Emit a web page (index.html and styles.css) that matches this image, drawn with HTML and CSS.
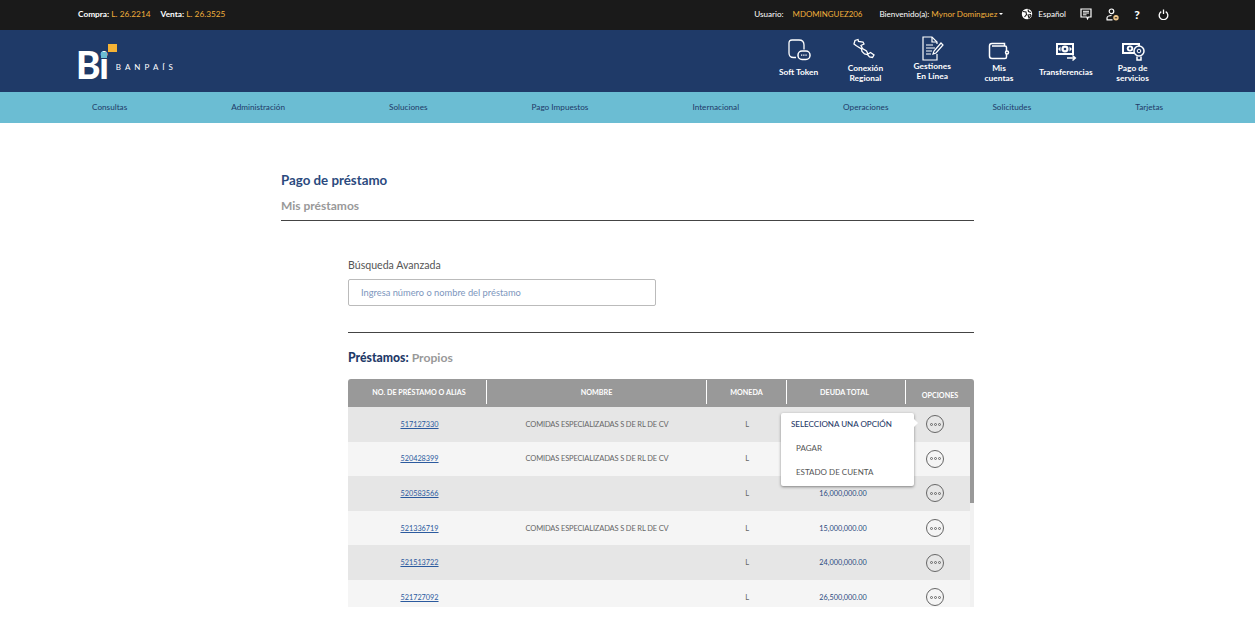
FILE: index.html
```html
<!DOCTYPE html>
<html lang="es">
<head>
<meta charset="utf-8">
<title>Pago de préstamo</title>
<link rel="stylesheet" href="styles.css">
</head>
<body>
<div class="topbar">
  <div class="rates">
    <span class="rate"><b>Compra:</b> <em>L. 26.2214</em></span>
    <span class="rate"><b>Venta:</b> <em>L. 26.3525</em></span>
  </div>
  <div class="account">
    <span class="user">Usuario: <em>MDOMINGUEZ206</em></span>
    <span class="welcome">Bienvenido(a): <em>Mynor Dominguez</em><i class="caret"></i></span>
    <span class="lang">
      <svg width="12" height="12" viewBox="0 0 12 12"><circle cx="6" cy="6" r="5.2" fill="#fff"/><path d="M2 3.5l3 .5 .5 2.5-2 2.5M7 1.5l.5 2 2.5 1M7 7l2.500-.5 .5 1-2 2.500z" fill="none" stroke="#1a1a1a" stroke-width="1.100"/></svg>
      Español
    </span>
    <svg class="ticon ticon-gap" width="12" height="12" viewBox="0 0 12 12"><path d="M1 1h10v8H8.500l-1 1.800-.6-1.800H1z" fill="none" stroke="#fff" stroke-width="1.200"/><path d="M3 3.300h6M3 5h6M3 6.800h3.500" stroke="#fff"/></svg>
    <svg class="ticon ticon-gap" width="13" height="13" viewBox="0 0 13 13"><circle cx="5.500" cy="3.300" r="2.300" fill="none" stroke="#fff" stroke-width="1.200"/><path d="M1 11.500V10c0-1.500 2-2.500 4.500-2.500M.5 11.800h6" fill="none" stroke="#fff" stroke-width="1.200"/><circle cx="10" cy="9.800" r="2.700" fill="#f0c78a"/><path d="M8.800 9.800h2.400" stroke="#1a1a1a"/></svg>
    <span class="help">?</span>
    <svg class="ticon" width="11" height="11" viewBox="0 0 11 11"><path d="M3.300 2.600a4.300 4.300 0 1 0 4.400 0" fill="none" stroke="#fff" stroke-width="1.300"/><path d="M5.500 .5V5" stroke="#fff" stroke-width="1.300"/></svg>
  </div>
</div>

<header class="brandbar">
  <div class="logo">
    <span class="logo-mark">Bi<i class="sq sq-y"></i><i class="sq sq-b"></i></span>
    <span class="logo-name">BANPAÍS</span>
  </div>
  <nav class="quick">
    <a class="qitem">
      <svg width="24" height="24" viewBox="0 0 24 24" fill="none" stroke="#fff" stroke-width="1.300"><path d="M9 19.500H6.500C3.500 19.500 2 17.500 2 15V5C2 3 3 2 5 2h7c3 0 5 2 5 5v4.500"/><rect x="11" y="13" width="12" height="8.500" rx="4" stroke-width="1.500"/><path d="M14 17.200h6" stroke-dasharray="1.300 .9"/></svg>
      <span>Soft Token</span>
    </a>
    <a class="qitem">
      <svg width="24" height="24" viewBox="0 0 24 24" fill="none" stroke="#fff" stroke-width="1.300"><path d="M1 6l1-3.500 3-1 .5 2 4.500.5 1 2-3 1.500 1.500 3 4 2.500 1.500 3 2.500-1.500 3.500 2.500-1.500 2.500-3-.5-2-2.500-3-.5-2.500-2.500-.5-2.500-4-2.500L3 7.500z"/></svg>
      <span>Conexión<br>Regional</span>
    </a>
    <a class="qitem tall">
      <svg width="24" height="25" viewBox="0 0 24 25" fill="none" stroke="#fff" stroke-width="1.200"><path d="M17 8V6l-5-5H3v23h14v-6"/><path d="M12 1v5h5"/><path d="M6 9h7M6 12h9M6 15h6M6 18h5"/><path d="M13 18l1-3 7-8 2 2-7 8z"/></svg>
      <span>Gestiones<br>En Línea</span>
    </a>
    <a class="qitem">
      <svg width="24" height="24" viewBox="0 0 24 24" fill="none" stroke="#fff" stroke-width="1.500"><path d="M5 8h13c1 0 1.500 .5 1.500 1.500V19c0 1-.5 1.500-1.500 1.500H5c-1.500 0-2.500-1-2.500-2.500V8C2.500 6.500 3.500 5.500 5 5.500h12.500V8"/><circle cx="20" cy="14.500" r="1.500" fill="#1f3a68"/></svg>
      <span>Mis<br>cuentas</span>
    </a>
    <a class="qitem">
      <svg width="24" height="24" viewBox="0 0 24 24"><path d="M2 5h18v12H2z" fill="#fff"/><path d="M4 7h14v8H4z" fill="#1f3a68"/><ellipse cx="11" cy="11" rx="3.600" ry="3.400" fill="#fff"/><circle cx="11" cy="11" r="1.300" fill="#1f3a68"/><path d="M4 11l2.500-2.500v5zM18 11l-2.500-2.500v5z" fill="#fff"/><path d="M13 20h8M18.500 17.500l2.800 2.500-2.800 2.500" fill="none" stroke="#fff" stroke-width="1.500"/></svg>
      <span>Transferencias</span>
    </a>
    <a class="qitem">
      <svg width="24" height="24" viewBox="0 0 24 24"><path d="M1 5h18v11H1z" fill="#fff"/><path d="M3 7h14v7H3z" fill="#1f3a68"/><ellipse cx="9" cy="10.500" rx="3.200" ry="3" fill="#fff"/><circle cx="9" cy="10.500" r="1.200" fill="#1f3a68"/><circle cx="18" cy="13" r="5" fill="#1f3a68" stroke="#fff" stroke-width="1.500"/><circle cx="18" cy="13" r="1.800" fill="none" stroke="#fff"/><path d="M16 18.500V22h4v-3.500" fill="none" stroke="#fff" stroke-width="1.500"/></svg>
      <span>Pago de<br>servicios</span>
    </a>
  </nav>
</header>

<nav class="menu">
  <a>Consultas</a><a>Administración</a><a>Soluciones</a><a>Pago Impuestos</a><a>Internacional</a><a>Operaciones</a><a>Solicitudes</a><a>Tarjetas</a>
</nav>

<main class="content">
  <h1 class="title">Pago de préstamo</h1>
  <h2 class="subtitle">Mis préstamos</h2>
  <section class="inner">
    <label class="search-label">Búsqueda Avanzada</label>
    <input class="search" type="text" placeholder="Ingresa número o nombre del préstamo">
    <hr class="rule">
    <h3 class="loans"><b>Préstamos:</b> Propios</h3>
    <div class="table">
      <div class="thead">
        <div class="th th-first">NO. DE PRÉSTAMO O ALIAS</div>
        <div class="th">NOMBRE</div>
        <div class="th">MONEDA</div>
        <div class="th th-debt">DEUDA TOTAL</div>
        <div class="th th-low">OPCIONES</div>
      </div>
      <div class="tbody">
        <div class="rows">
          <div class="row"><a class="num">517127330</a><span>COMIDAS ESPECIALIZADAS S DE RL DE CV</span><span>L</span><span class="amt"></span><i class="dots"><u></u><u></u><u></u></i></div>
          <div class="row"><a class="num">520428399</a><span>COMIDAS ESPECIALIZADAS S DE RL DE CV</span><span>L</span><span class="amt"></span><i class="dots"><u></u><u></u><u></u></i></div>
          <div class="row"><a class="num">520583566</a><span></span><span>L</span><span class="amt">16,000,000.00</span><i class="dots"><u></u><u></u><u></u></i></div>
          <div class="row"><a class="num">521336719</a><span>COMIDAS ESPECIALIZADAS S DE RL DE CV</span><span>L</span><span class="amt">15,000,000.00</span><i class="dots"><u></u><u></u><u></u></i></div>
          <div class="row"><a class="num">521513722</a><span></span><span>L</span><span class="amt">24,000,000.00</span><i class="dots"><u></u><u></u><u></u></i></div>
          <div class="row"><a class="num">521727092</a><span></span><span>L</span><span class="amt">26,500,000.00</span><i class="dots"><u></u><u></u><u></u></i></div>
        </div>
        <div class="track"><div class="thumb"></div></div>
      </div>
      <div class="popover">
        <div class="pop-title">SELECCIONA UNA OPCIÓN</div>
        <a class="pop-item">PAGAR</a>
        <a class="pop-item">ESTADO DE CUENTA</a>
      </div>
    </div>
  </section>
</main>
</body>
</html>
```

FILE: styles.css
```css
* { box-sizing: border-box; }
html, body { margin: 0; padding: 0; height: 637px; overflow: hidden; background: #fff; }
body { font-family: Lato, "Liberation Sans", sans-serif; color: #555; }
em { font-style: normal; }

.topbar { height: 30px; background: #1a1a1a; color: #fff; display: flex; justify-content: space-between; align-items: center; padding: 0 86px 2px 78px; font-size: 8.3px; }
.rates { display: flex; gap: 10px; }
.rate b { font-weight: 700; }
.rate em { color: #f2b03c; }
.account { display: flex; align-items: center; font-size: 8.1px; }
.user { margin-right: 17px; }
.user em { color: #f2b03c; margin-left: 7px; font-size: 7.900px; }
.welcome { margin-right: 18px; display: flex; align-items: center; white-space: pre; }
.welcome em { color: #f2b03c; }
.caret { width: 0; height: 0; border: 2px solid transparent; border-top-color: #fff; border-bottom: 0; margin-left: 2px; }
.lang { display: flex; align-items: center; gap: 5px; margin-right: 14px; }
.ticon { display: block; }
.ticon-gap { margin-right: 14px; }
.help { font-size: 12px; font-weight: 900; width: 8px; margin-right: 17px; text-align: center; }

.brandbar { height: 62px; background: #1f3a68; display: flex; justify-content: space-between; align-items: center; padding: 0 89px 0 78px; }
.logo { display: flex; height: 62px; }
.logo-mark { position: relative; display: block; color: #fff; font-size: 37px; line-height: 36px; font-weight: 900; letter-spacing: -1px; margin: 17px 0 0 -2px; height: 36px; }
.sq { position: absolute; display: block; }
.sq-y { width: 9px; height: 8px; background: #f5b335; left: 32px; top: -3px; }
.sq-b { width: 6px; height: 6px; background: #6bbdd3; left: 25px; top: 5px; }
.logo-name { color: #fff; font-size: 8px; letter-spacing: 4px; align-self: center; margin: 12px 0 0 8px; }

.quick { display: flex; height: 62px; }
.qitem { width: 66.8px; display: flex; flex-direction: column; align-items: center; color: #fff; font-size: 8.4px; font-weight: 700; line-height: 9.5px; text-align: center; padding-top: 8px; }
.qitem svg { display: block; flex: none; }
.qitem span { margin-top: 6px; }
.qitem:nth-child(2) span, .qitem:nth-child(4) span, .qitem:nth-child(6) span { margin-top: 2px; }
.qitem.tall { padding-top: 6px; }
.qitem.tall span { margin-top: 1px; }

.menu { height: 31px; background: #6bbdd3; display: flex; justify-content: space-between; align-items: center; padding: 0 92px 2px; font-size: 8.2px; color: #1f3a68; }

.content { width: 693px; margin: 0 0 0 281px; padding-top: 49px; }
.title { margin: 0; font-size: 13.3px; line-height: 17px; font-weight: 700; color: #2b4a7e; }
.subtitle { margin: 9px 0 0; padding-bottom: 6px; font-size: 12px; line-height: 16px; font-weight: 700; color: #999; border-bottom: 1px solid #444; }
.inner { margin-left: 67px; padding-top: 37px; }
.search-label { display: block; font-size: 10.6px; line-height: 15px; color: #555; }
.search { display: block; width: 308px; height: 27px; margin-top: 6px; border: 1px solid #bbb; border-radius: 2px; padding: 0 12px; font: 9.3px Lato, sans-serif; background: #fff; }
.search::placeholder { color: #7d96bd; opacity: 1; }
.rule { margin: 26px 0 0; border: 0; border-top: 1px solid #444; }
.loans { margin: 17px 0 0; font-size: 12.2px; line-height: 16px; font-weight: 700; color: #999; }
.loans b { color: #1f3a68; }

.table { position: relative; margin-top: 13px; width: 626px; }
.thead { height: 28px; background: #999; border-radius: 3px 3px 0 0; display: grid; grid-template-columns: 139px 220px 80px 119px 68px; color: #fff; font-size: 7.2px; font-weight: 700; }
.th { display: flex; align-items: center; justify-content: center; height: 24px; margin-top: 1px; border-right: 1px solid #fff; }
.th-first { padding-left: 4px; }
.th-debt { padding-right: 3px; }
.th-low { border-right: 0; height: 28px; margin-top: 2px; }
.tbody { display: flex; height: 200px; overflow: hidden; }
.rows { width: 622px; flex: none; }
.row { height: 34.600px; display: grid; grid-template-columns: 139px 220px 80px 119px 64px; align-items: center; justify-items: center; font-size: 7.500px; color: #666; background: #f5f5f5; letter-spacing: -.15px; }
.row:nth-child(odd) { background: #e6e6e6; }
.num { color: #2b5a9e; text-decoration: underline; margin-left: 4px; letter-spacing: 0; font-size: 7.300px; }
.amt { color: #2b4a7e; margin-right: 7px; letter-spacing: 0; font-size: 7.300px; }
.dots { width: 18px; height: 18px; border: 1px solid #666; border-radius: 50%; display: flex; align-items: center; justify-content: center; gap: 1px; margin-right: 6px; }
.dots u { display: block; width: 3px; height: 3px; border: 1px solid #666; border-radius: 50%; }
.track { width: 4px; background: #f1f1f1; }
.thumb { height: 96px; background: #999; }

.popover { position: absolute; left: 433px; top: 34px; width: 133px; height: 73px; background: #fff; border-radius: 2px; box-shadow: 0 1px 3px rgba(0,0,0,.45); padding: 5px 10px; font-size: 8px; line-height: 12px; color: #555; white-space: nowrap; }
.pop-title { color: #1f3a68; font-weight: 500; }
.pop-item { display: block; margin: 12px 0 0 5px; }
.popover::after { content: ""; position: absolute; right: -4px; top: 6px; border: 4px solid transparent; border-left-color: #fff; border-right: 0; }
```
